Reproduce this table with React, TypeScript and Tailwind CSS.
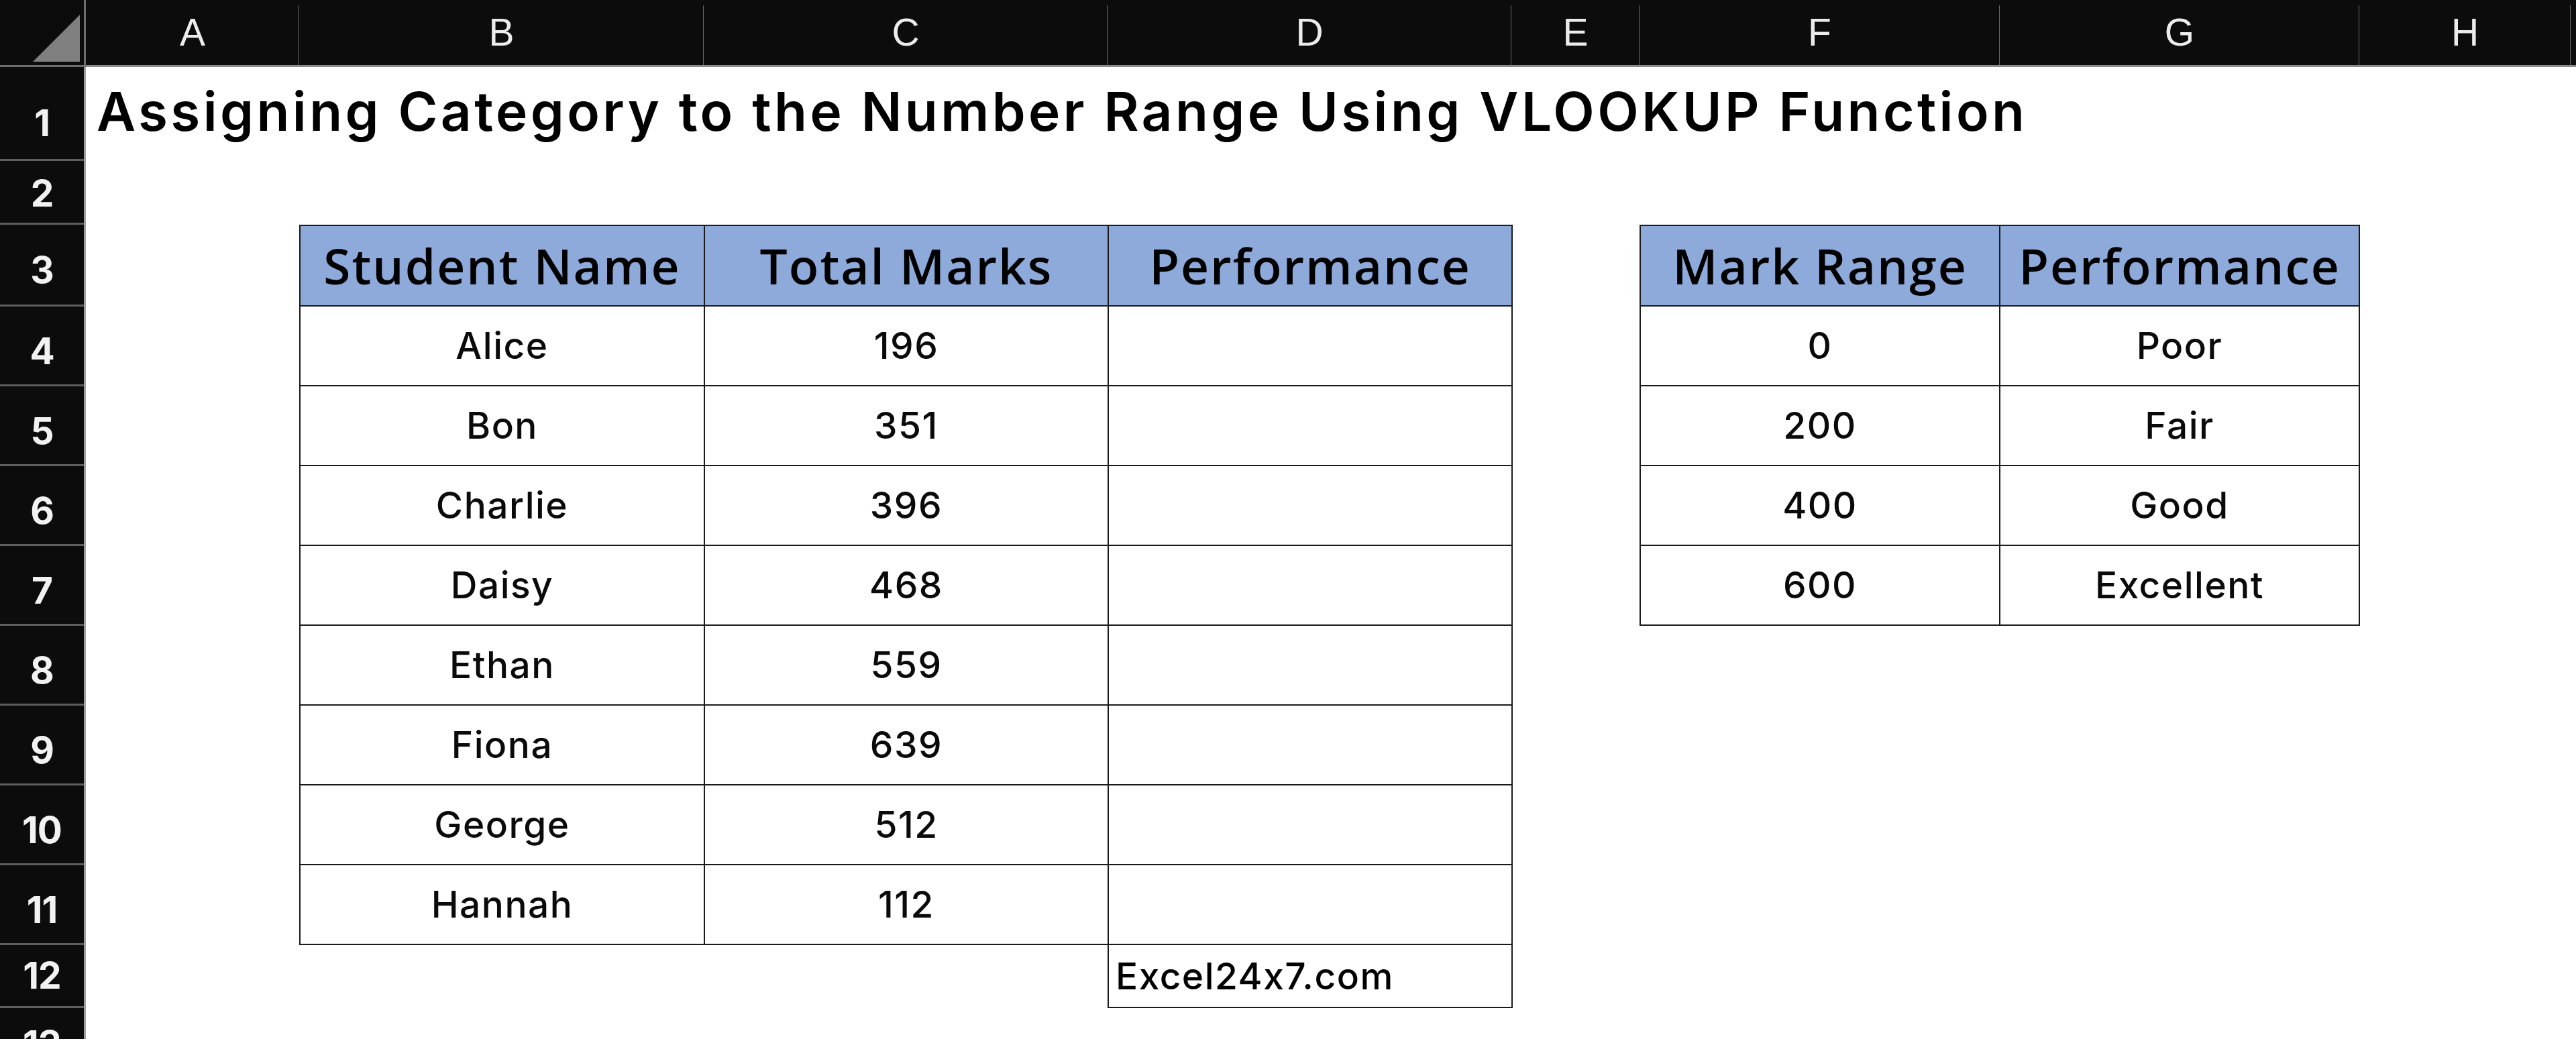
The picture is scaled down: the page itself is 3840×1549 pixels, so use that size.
import React from 'react';

const COLUMNS = [
    { label: 'A', width: 'w-[318px]' },
    { label: 'B', width: 'w-[603px]' },
    { label: 'C', width: 'w-[602px]' },
    { label: 'D', width: 'w-[602px]' },
    { label: 'E', width: 'w-[191px]' },
    { label: 'F', width: 'w-[537px]' },
    { label: 'G', width: 'w-[536px]' },
    { label: 'H', width: 'w-[315px]' },
    { label: '', width: 'flex-1' },
];

// row height + a small nudge for where the number sits
const ROWS = [
    { n: 1, h: 'h-[140px] pt-[30px]' },
    { n: 2, h: 'h-[95px] pt-[4px]' },
    { n: 3, h: 'h-[122px] pt-[16px]' },
    { n: 4, h: 'h-[119px] pt-[16px]' },
    { n: 5, h: 'h-[119px] pt-[16px]' },
    { n: 6, h: 'h-[119px] pt-[16px]' },
    { n: 7, h: 'h-[119px] pt-[16px]' },
    { n: 8, h: 'h-[119px] pt-[16px]' },
    { n: 9, h: 'h-[119px] pt-[16px]' },
    { n: 10, h: 'h-[119px] pt-[16px]' },
    { n: 11, h: 'h-[119px] pt-[16px]' },
    { n: 12, h: 'h-[94px] pt-[0px]' },
    { n: 13, h: 'h-[94px] pt-[16px]' },
];

const STUDENTS = [
    ['Alice', '196'],
    ['Bon', '351'],
    ['Charlie', '396'],
    ['Daisy', '468'],
    ['Ethan', '559'],
    ['Fiona', '639'],
    ['George', '512'],
    ['Hannah', '112'],
];

const RANGES = [
    ['0', 'Poor'],
    ['200', 'Fair'],
    ['400', 'Good'],
    ['600', 'Excellent'],
];

const headFont = "font-['Open_Sans',sans-serif] font-semibold text-[73px] tracking-[2px]";
const bodyFont = "font-['Inter',sans-serif] font-[550] text-[55px] tracking-[1.5px]";
const cellBorder = 'border-r-2 border-b-2 border-[#1a1a1a]';

function HeadCell({ children, width }: { children: React.ReactNode; width: string }) {
    return (
        <div className={`${width} h-full flex items-center justify-center bg-[#8eaadb] text-black ${headFont} ${cellBorder}`}>
            {children}
        </div>
    );
}

function BodyCell({ children, width }: { children?: React.ReactNode; width: string }) {
    return (
        <div className={`${width} h-full flex items-center justify-center bg-white text-[#0a0a0a] ${bodyFont} ${cellBorder}`}>
            {children}
        </div>
    );
}

export default function App() {
    return (
        <div className="w-[3840px] h-[1549px] overflow-hidden bg-white flex flex-col">
            {/* column letters */}
            <div className="flex h-[100px] shrink-0 bg-[#0c0c0c]">
                <div className="w-[128px] h-full border-r-[3px] border-b-[3px] border-[#6e6e6e]">
                    <svg width="125" height="97" viewBox="0 0 125 97">
                        <polygon points="119,22 119,92 49,92" fill="#808080" />
                    </svg>
                </div>
                {COLUMNS.map((c, i) => (
                    <div
                        key={i}
                        className={`${c.width} h-full flex items-center justify-center border-b-[3px] border-[#8a8a8a] relative text-[#ececec] font-['Liberation_Sans',Arial,sans-serif] text-[57px]`}
                    >
                        {c.label}
                        {i < COLUMNS.length - 1 && (
                            <span className="absolute right-0 top-[8px] bottom-0 w-px bg-[#6a6a6a]" />
                        )}
                    </div>
                ))}
            </div>

            <div className="flex flex-1">
                {/* row numbers */}
                <div className="w-[128px] shrink-0 flex flex-col bg-[#0c0c0c] border-r-[3px] border-[#a0a0a0]">
                    {ROWS.map((r) => (
                        <div
                            key={r.n}
                            className={`${r.h} shrink-0 flex items-center justify-center border-b-[3px] border-[#5e5e5e] text-[#f2f2f2] font-['Inter',sans-serif] font-bold text-[55px] tracking-[-1px]`}
                        >
                            {r.n}
                        </div>
                    ))}
                </div>

                {/* sheet */}
                <div className="flex-1 flex flex-col">
                    <div className="h-[140px] flex items-center pl-[16px] pb-[8px] text-black font-['Inter',sans-serif] font-semibold text-[80px] tracking-[4.4px] whitespace-nowrap">
                        Assigning Category to the Number Range Using VLOOKUP Function
                    </div>
                    <div className="h-[95px]" />

                    <div className="flex items-start">
                        <div className="w-[318px] shrink-0" />

                        <div className="flex flex-col shrink-0">
                            <div className="border-l-2 border-t-2 border-[#1a1a1a]">
                                <div className="flex h-[120px]">
                                    <HeadCell width="w-[603px]">Student Name</HeadCell>
                                    <HeadCell width="w-[602px]">Total Marks</HeadCell>
                                    <HeadCell width="w-[602px]">Performance</HeadCell>
                                </div>
                                {STUDENTS.map(([name, marks]) => (
                                    <div key={name} className="flex h-[119px]">
                                        <BodyCell width="w-[603px]">{name}</BodyCell>
                                        <BodyCell width="w-[602px]">{marks}</BodyCell>
                                        <BodyCell width="w-[602px]" />
                                    </div>
                                ))}
                            </div>
                            <div className={`ml-[1205px] w-[604px] h-[94px] flex items-center pl-[10px] border-l-2 border-r-2 border-b-2 border-[#1a1a1a] text-black ${bodyFont}`}>
                                Excel24x7.com
                            </div>
                        </div>

                        <div className="w-[189px] shrink-0" />

                        <div className="shrink-0 border-l-2 border-t-2 border-[#1a1a1a]">
                            <div className="flex h-[120px]">
                                <HeadCell width="w-[536px]">Mark Range</HeadCell>
                                <HeadCell width="w-[536px]">Performance</HeadCell>
                            </div>
                            {RANGES.map(([min, label]) => (
                                <div key={min} className="flex h-[119px]">
                                    <BodyCell width="w-[536px]">{min}</BodyCell>
                                    <BodyCell width="w-[536px]">{label}</BodyCell>
                                </div>
                            ))}
                        </div>
                    </div>
                </div>
            </div>
        </div>
    );
}
